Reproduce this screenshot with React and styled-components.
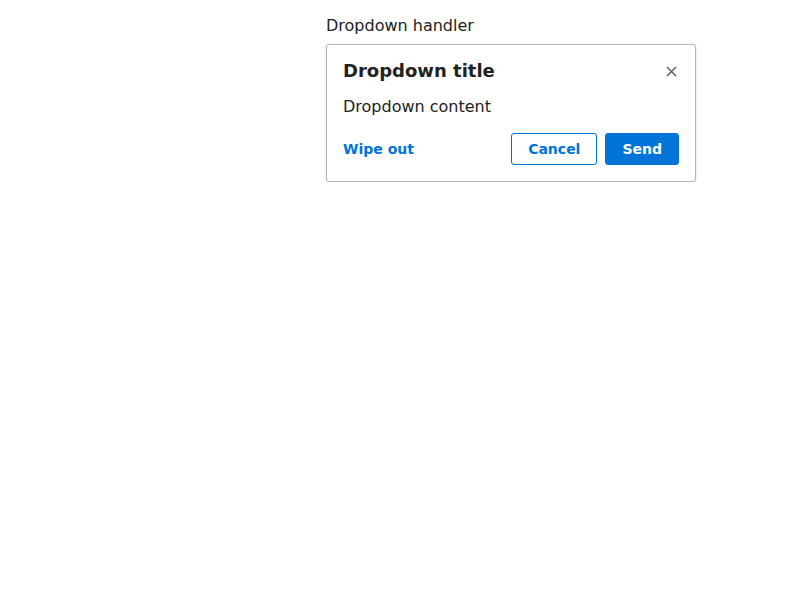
import React from 'react';
import styled, { createGlobalStyle } from 'styled-components';

const Global = createGlobalStyle`
  body {
    margin: 0;
    font-family: "DejaVu Sans", sans-serif;
    color: #222;
    background: #fff;
  }
`;

const Page = styled.div`
  padding: 16px 0 0 326px;
`;

const Anchor = styled.div`
  display: flex;
  flex-direction: column;
  align-items: flex-start;
`;

const Handler = styled.div`
  font-size: 16px;
  line-height: 20px;
  color: #222;
  cursor: pointer;
`;

const Dropdown = styled.div`
  margin-top: 8px;
  width: 368px;
  border: 1px solid #b5b5b5;
  border-radius: 3px;
  background: #fff;
  box-shadow: 0 1px 3px rgba(0, 0, 0, 0.15);
`;

const Header = styled.div`
  display: flex;
  align-items: center;
  justify-content: space-between;
  padding: 14px 16px 0 16px;
`;

const Title = styled.h3`
  margin: 0;
  font-size: 18px;
  line-height: 24px;
  font-weight: bold;
  color: #222;
`;

const Close = styled.button`
  border: 0;
  background: none;
  padding: 0;
  width: 16px;
  height: 16px;
  display: flex;
  align-items: center;
  justify-content: center;
  cursor: pointer;
`;

const Content = styled.div`
  padding: 14px 16px 0 16px;
  font-size: 16px;
  line-height: 20px;
`;

const Footer = styled.div`
  display: flex;
  align-items: center;
  justify-content: space-between;
  padding: 16px;
`;

const Actions = styled.div`
  display: flex;
  gap: 8px;
`;

const LinkButton = styled.button`
  border: 0;
  background: none;
  padding: 0;
  font-family: inherit;
  font-size: 14px;
  font-weight: bold;
  color: #0074d9;
  cursor: pointer;
`;

const Button = styled.button`
  height: 32px;
  box-sizing: border-box;
  padding: 0 16px;
  border-radius: 3px;
  border: 1px solid #0074d9;
  background: ${p => (p.$primary ? '#0074d9' : '#fff')};
  color: ${p => (p.$primary ? '#fff' : '#0074d9')};
  font-family: inherit;
  font-size: 14px;
  font-weight: bold;
  cursor: pointer;
`;

export default function App() {
  return (
    <>
      <Global />
      <Page>
        <Anchor>
          <Handler>Dropdown handler</Handler>
          <Dropdown>
            <Header>
              <Title>Dropdown title</Title>
              <Close aria-label="close">
                <svg width="11" height="11" viewBox="0 0 11 11">
                  <path d="M1 1L10 10M10 1L1 10" stroke="#666" strokeWidth="1.6" />
                </svg>
              </Close>
            </Header>
            <Content>Dropdown content</Content>
            <Footer>
              <LinkButton>Wipe out</LinkButton>
              <Actions>
                <Button>Cancel</Button>
                <Button $primary>Send</Button>
              </Actions>
            </Footer>
          </Dropdown>
        </Anchor>
      </Page>
    </>
  );
}
